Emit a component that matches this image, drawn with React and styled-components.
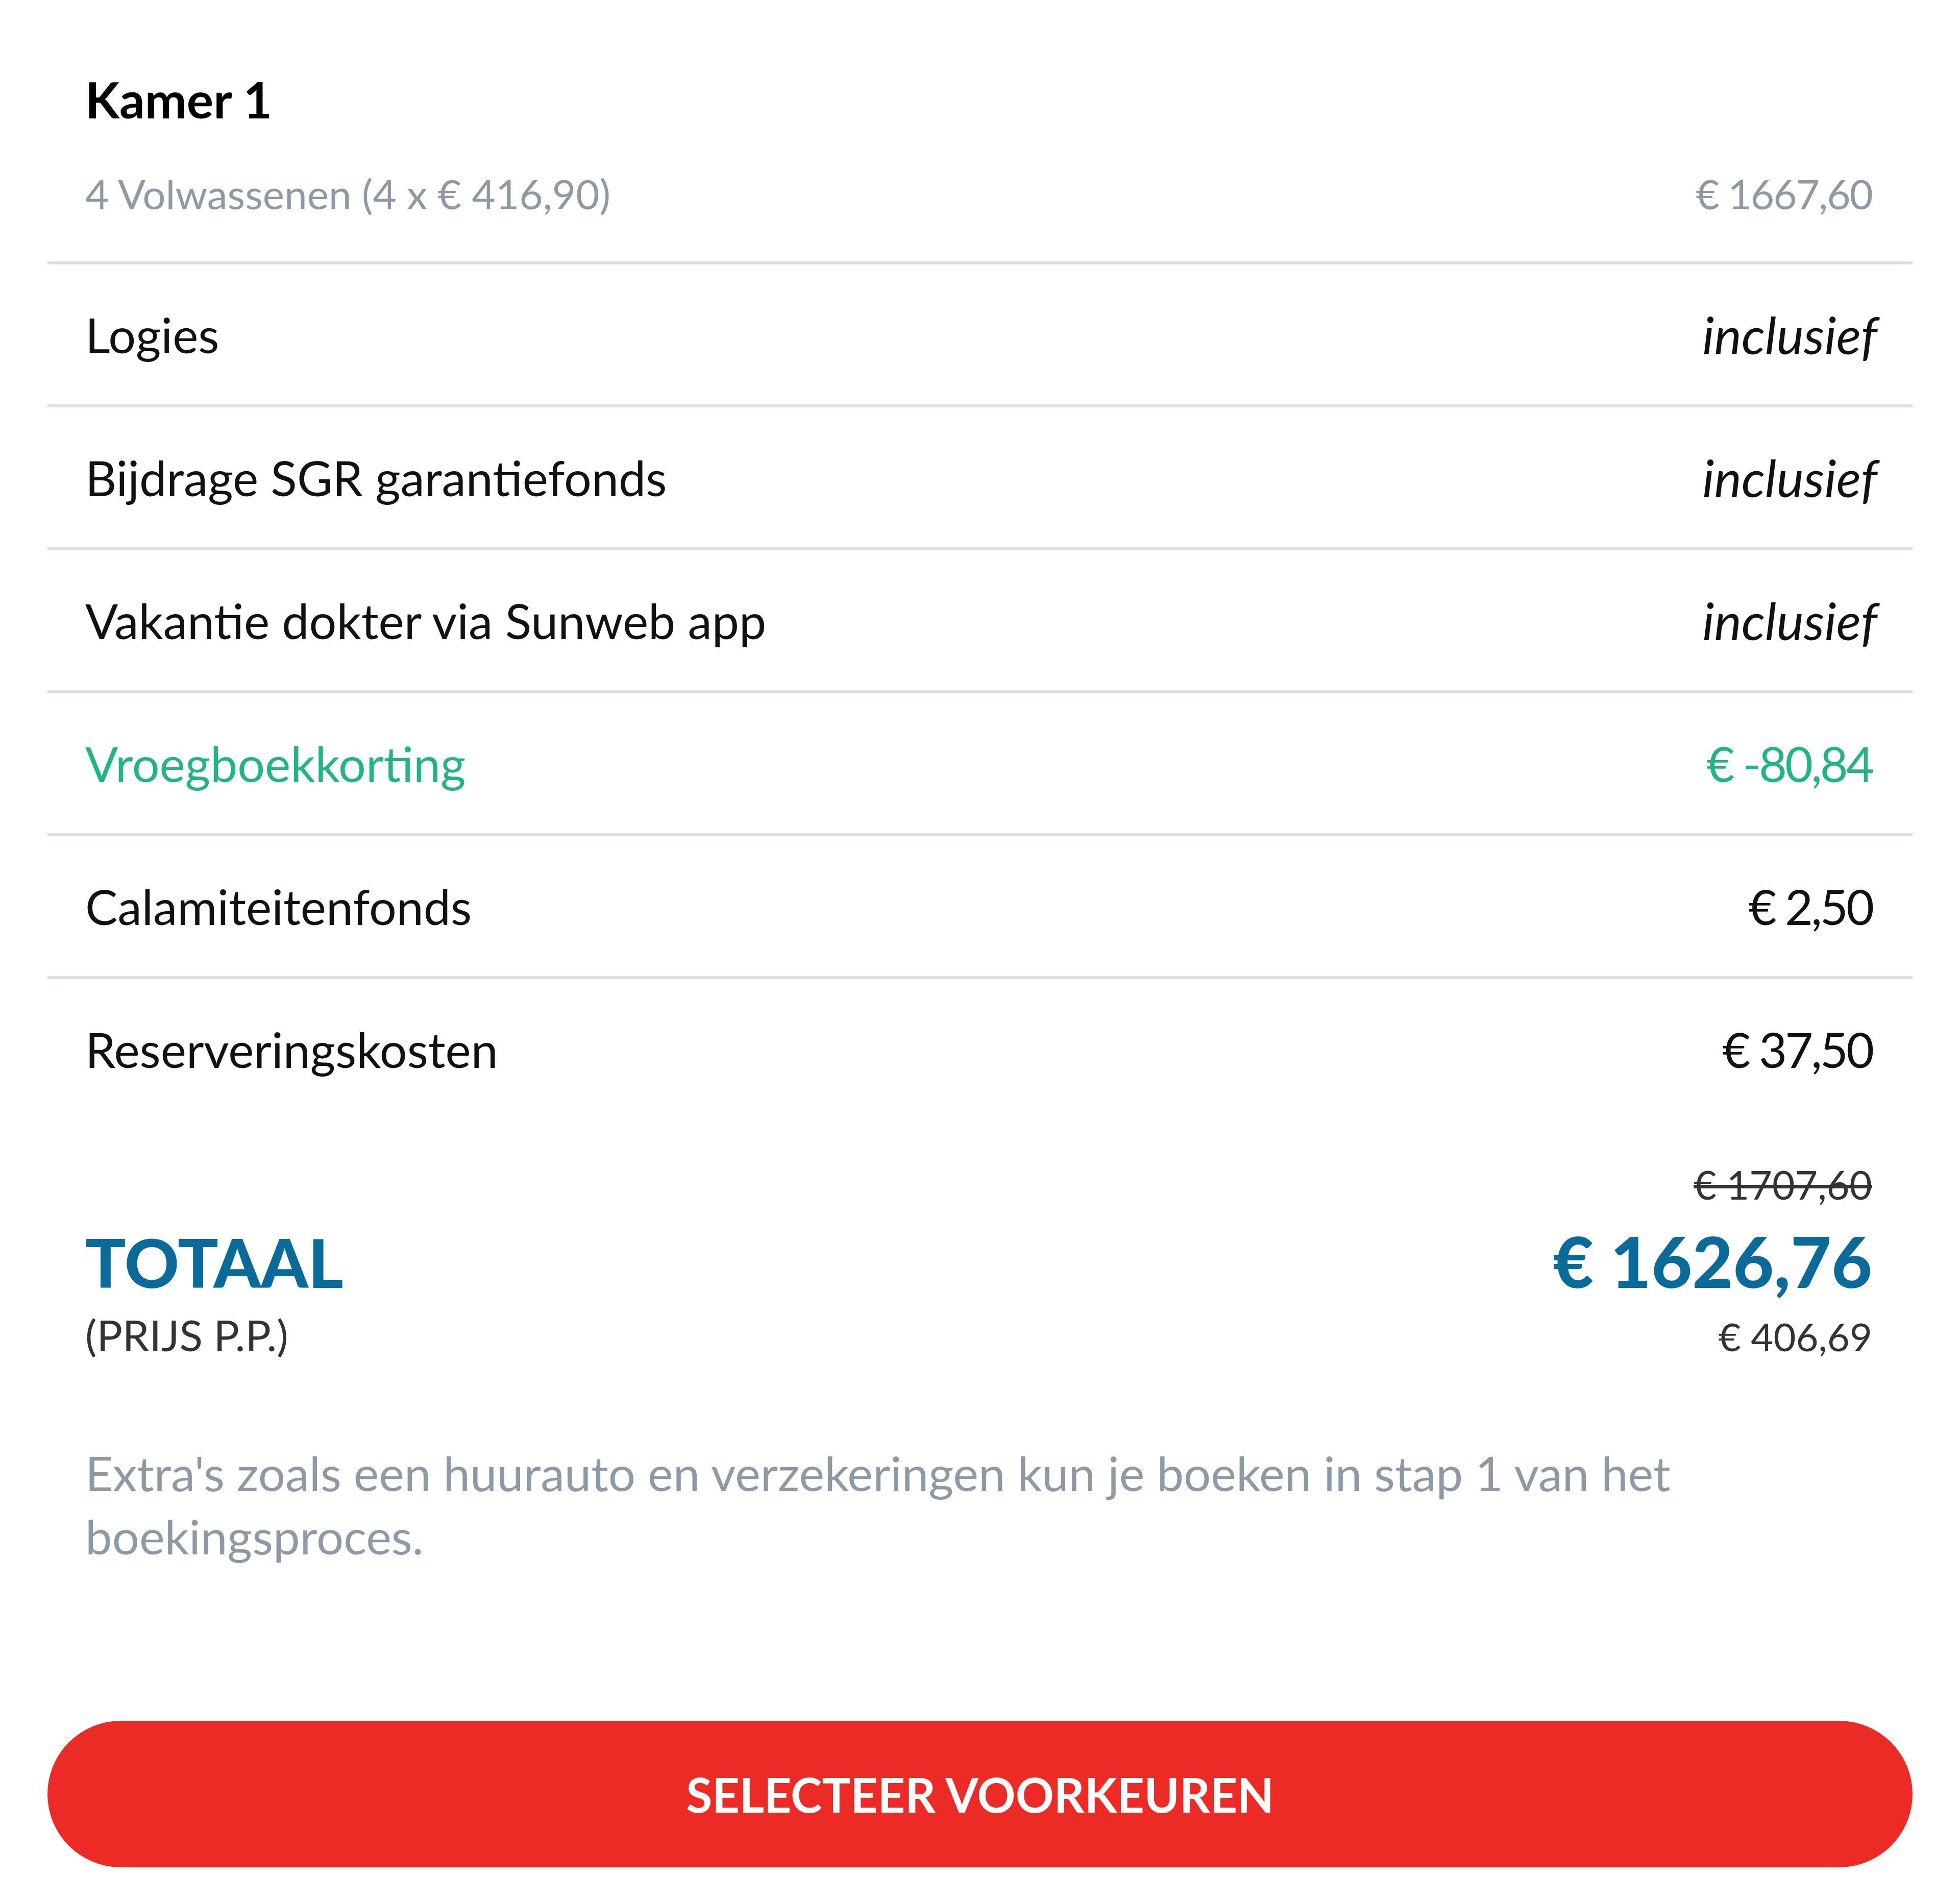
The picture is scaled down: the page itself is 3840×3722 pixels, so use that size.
import React from "react";
import styled, { createGlobalStyle } from "styled-components";

const GlobalStyle = createGlobalStyle`
  html, body {
    margin: 0;
    padding: 0;
    background: #ffffff;
  }
  body {
    font-family: Lato, "Liberation Sans", sans-serif;
    color: #111111;
  }
`;

const Panel = styled.div`
  width: 3840px;
  box-sizing: border-box;
  padding: 0 93px 62px;
`;

const Header = styled.div`
  padding: 145px 79px 93px 74px;
  border-bottom: 6px solid #dbe1e5;
`;

const RoomTitle = styled.h2`
  margin: 0 0 96px;
  font-size: 98px;
  line-height: 1;
  font-weight: 700;
  color: #000000;
`;

const SubLine = styled.div`
  display: flex;
  justify-content: space-between;
  font-size: 80px;
  line-height: 1;
  color: #8d9aa4;
`;

const Amount = styled.span`
  letter-spacing: ${(p) => p.$tight || "-4px"};
`;

const Row = styled.div`
  display: flex;
  justify-content: space-between;
  align-items: center;
  height: 274px;
  padding: 0 79px 0 74px;
  font-size: 95px;
  line-height: 1;
  color: ${(p) => (p.$green ? "#22b582" : "#111111")};
  border-bottom: ${(p) => (p.$last ? "none" : "6px solid #dbe1e5")};
`;

const Included = styled.span`
  font-style: italic;
  font-size: 101px;
  margin-right: -10px;
`;

const Totals = styled.div`
  padding: 90px 79px 0 74px;
`;

const OldPrice = styled.div`
  text-align: right;
  font-size: 77px;
  line-height: 1;
  color: #333333;
  text-decoration: line-through;
  margin-bottom: 42px;
`;

const TotalLine = styled.div`
  display: flex;
  justify-content: space-between;
  align-items: baseline;
  line-height: 1;
  font-weight: 900;
  color: #0a6a99;
  margin-bottom: 34px;
`;

const TotalLabel = styled.span`
  font-size: 132px;
`;

const TotalPrice = styled.span`
  font-size: 138px;
`;

const PerPerson = styled.div`
  display: flex;
  justify-content: space-between;
  align-items: baseline;
  line-height: 1;
  color: #333333;
`;

const PerLabel = styled.span`
  font-size: 84px;
`;

const PerValue = styled.span`
  font-size: 76px;
`;

const Note = styled.p`
  margin: 166px 0 0;
  padding: 0 79px 0 74px;
  font-size: 94px;
  line-height: 124px;
  color: #8d9aa4;
`;

const SelectButton = styled.button`
  display: flex;
  align-items: center;
  justify-content: center;
  width: 100%;
  height: 287px;
  margin-top: 300px;
  border: none;
  border-radius: 144px;
  background: #ec2a26;
  color: #ffffff;
  font-family: Lato, "Liberation Sans", sans-serif;
  font-size: 93px;
  font-weight: 700;
  cursor: pointer;
`;

const rows = [
  { label: "Logies", value: "inclusief", included: true },
  { label: "Bijdrage SGR garantiefonds", value: "inclusief", included: true },
  { label: "Vakantie dokter via Sunweb app", value: "inclusief", included: true },
  { label: "Vroegboekkorting", value: "€ -80,84", green: true },
  { label: "Calamiteitenfonds", value: "€ 2,50" },
  { label: "Reserveringskosten", value: "€ 37,50" },
];

const App = () => {
  return (
    <>
      <GlobalStyle />
      <Panel>
        <Header>
          <RoomTitle>Kamer 1</RoomTitle>
          <SubLine>
            <span>4 Volwassenen (4 x € 416,90)</span>
            <Amount $tight="-2px">€ 1667,60</Amount>
          </SubLine>
        </Header>
        {rows.map((row, index) => (
          <Row key={row.label} $green={row.green} $last={index === rows.length - 1}>
            <span>{row.label}</span>
            {row.included ? <Included>{row.value}</Included> : <Amount>{row.value}</Amount>}
          </Row>
        ))}
        <Totals>
          <OldPrice>€ 1707,60</OldPrice>
          <TotalLine>
            <TotalLabel>TOTAAL</TotalLabel>
            <TotalPrice>€ 1626,76</TotalPrice>
          </TotalLine>
          <PerPerson>
            <PerLabel>(PRIJS P.P.)</PerLabel>
            <PerValue>€ 406,69</PerValue>
          </PerPerson>
        </Totals>
        <Note>
          Extra's zoals een huurauto en verzekeringen kun je boeken in stap 1 van het
          boekingsproces.
        </Note>
        <SelectButton>SELECTEER VOORKEUREN</SelectButton>
      </Panel>
    </>
  );
};

export default App;
